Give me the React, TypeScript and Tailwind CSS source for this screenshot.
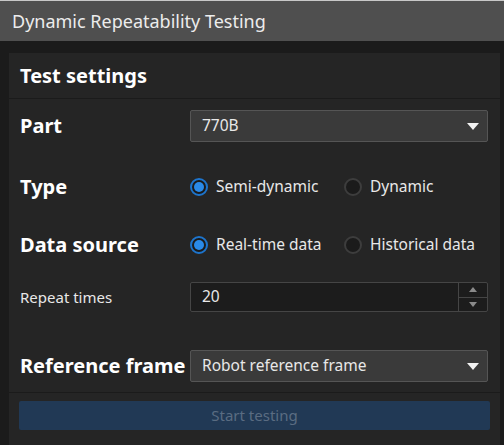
import { ReactNode } from 'react';

const font = { fontFamily: '"Segoe UI", "Noto Sans", "Open Sans", sans-serif' };

function Caret({ size = 'md' }: { size?: 'md' | 'sm' }) {
  if (size === 'sm') {
    return (
      <svg width="8" height="5" viewBox="0 0 8 5">
        <path d="M0 0 L8 0 L4 5 Z" fill="#8a8a8a" />
      </svg>
    );
  }
  return (
    <svg width="12" height="7" viewBox="0 0 12 7">
      <path d="M0 0 L12 0 L6 7 Z" fill="#f2f2f2" />
    </svg>
  );
}

function Select({ value }: { value: string }) {
  return (
    <div className="flex h-[32px] w-[298px] items-center justify-between rounded-[2px] border border-[#555555] bg-[#3a3a3a] pl-[11px] pr-[8px] text-[15.5px] text-[#e8e8e8]">
      <span>{value}</span>
      <Caret />
    </div>
  );
}

function Radio({ label, checked }: { label: string; checked?: boolean }) {
  return (
    <div className="flex items-center gap-[8px]">
      {checked ? (
        <span className="flex h-[18px] w-[18px] items-center justify-center rounded-full border-2 border-[#1d74cc] bg-[#1b1b1b]">
          <span className="h-[10px] w-[10px] rounded-full bg-[#2a8ae8]" />
        </span>
      ) : (
        <span className="h-[18px] w-[18px] rounded-full border-2 border-[#3d3d3d] bg-[#1b1b1b]" />
      )}
      <span className="text-[15.5px] text-[#e8e8e8]">{label}</span>
    </div>
  );
}

function Row({ label, bold = true, className, children }: { label: string; bold?: boolean; className?: string; children: ReactNode }) {
  return (
    <div className={`flex items-center ${className ?? ''}`}>
      <div className={bold ? 'w-[170px] shrink-0 whitespace-nowrap text-[20px] font-bold text-white' : 'w-[170px] shrink-0 text-[15px] text-[#e8e8e8]'}>{label}</div>
      {children}
    </div>
  );
}

export default function App() {
  return (
    <div className="flex h-[445px] w-[504px] flex-col overflow-hidden bg-[#1b1b1b]" style={font}>
      <div className="h-px bg-[#c8c8c8]" />
      <div className="flex h-[40px] items-center bg-[#4f4f4f] pl-[12px] text-[18px] text-[#ececec]">
        Dynamic Repeatability Testing
      </div>
      <div className="ml-[9px] mr-[4px] mt-[12px] flex flex-1 flex-col bg-[#252525]">
        <div className="flex h-[46px] items-center border-b border-[#1b1b1b] pl-[11px] text-[20px] font-bold text-white">
          Test settings
        </div>
        <div className="flex flex-col pl-[11px]">
          <Row label="Part" className="mt-[11px] h-[32px]">
            <Select value="770B" />
          </Row>
          <Row label="Type" className="mt-[28px] h-[34px]">
            <div className="flex">
              <div className="w-[154px]">
                <Radio label="Semi-dynamic" checked />
              </div>
              <Radio label="Dynamic" />
            </div>
          </Row>
          <Row label="Data source" className="mt-[24px] h-[34px]">
            <div className="flex">
              <div className="w-[154px]">
                <Radio label="Real-time data" checked />
              </div>
              <Radio label="Historical data" />
            </div>
          </Row>
          <Row label="Repeat times" bold={false} className="mt-[20px] h-[30px]">
            <div className="flex h-[30px] w-[298px] rounded-[2px] border border-[#454545] bg-[#1c1c1c]">
              <div className="flex flex-1 items-center pl-[11px] text-[15.5px] text-[#e8e8e8]">20</div>
              <div className="flex w-[29px] flex-col border-l border-[#454545]">
                <div className="flex flex-1 items-center justify-center border-b border-[#454545]">
                  <span className="rotate-180">
                    <Caret size="sm" />
                  </span>
                </div>
                <div className="flex flex-1 items-center justify-center">
                  <Caret size="sm" />
                </div>
              </div>
            </div>
          </Row>
          <Row label="Reference frame" className="mt-[38px] h-[32px]">
            <Select value="Robot reference frame" />
          </Row>
        </div>
        <div className="mt-[10px] border-t border-[#1b1b1b] px-[10px] pt-[8px]">
          <div className="flex h-[29px] items-center justify-center rounded-[2px] bg-[#213955] text-[15px] text-[#5a6c82]">
            Start testing
          </div>
        </div>
      </div>
    </div>
  );
}
